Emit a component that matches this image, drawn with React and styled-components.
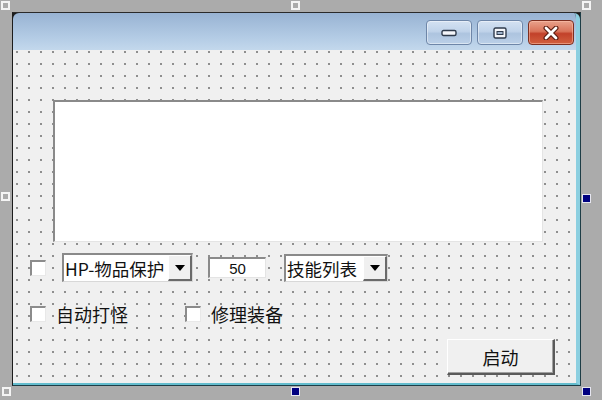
import styled, { createGlobalStyle } from 'styled-components'

const GlobalStyle = createGlobalStyle`
  html, body {
    margin: 0;
    padding: 0;
    background: #ababab;
  }
  body {
    font-family: 'Noto Sans CJK SC', 'Noto Sans', sans-serif;
  }
`

const Stage = styled.div`
  position: relative;
  width: 602px;
  height: 400px;
  box-sizing: border-box;
  padding: 12px 21px 14px 12px;
  background: #ababab;
  overflow: hidden;
`

const Handle = styled.div`
  position: absolute;
  box-sizing: border-box;
  width: 9px;
  height: 9px;
  left: ${({ x }) => x}px;
  top: ${({ y }) => y}px;
  border: ${({ active }) => (active ? '1px solid #e6e6f0' : '2px solid #f4f4f4')};
  background: ${({ active }) => (active ? '#000080' : 'transparent')};
`

const Window = styled.div`
  width: 100%;
  height: 100%;
  box-sizing: border-box;
  display: flex;
  flex-direction: column;
  background: #1c1c1c;
  border-left: 1px solid #1c1c1c;
  border-top: 1px solid #2a2a2a;
  border-right: 1px solid #1e3d46;
  border-bottom: 1px solid #1e3d46;
`

const Frame = styled.div`
  flex: 1;
  display: flex;
  flex-direction: column;
  border-right: 4px solid #8ccfe0;
  border-bottom: 2px solid #63bccd;
  border-top-left-radius: 6px;
  border-top-right-radius: 6px;
  overflow: hidden;
`

const TitleBar = styled.div`
  height: 37px;
  box-sizing: border-box;
  display: flex;
  justify-content: flex-end;
  align-items: flex-start;
  gap: 5px;
  padding: 7px 2px 0 0;
  background: linear-gradient(#98b3d3, #b5cde6 70%, #c3d8ec);
`

const CapButton = styled.div`
  width: 46px;
  height: 25px;
  box-sizing: border-box;
  display: flex;
  align-items: center;
  justify-content: center;
  border-radius: 4px;
  border: 1px solid ${({ close }) => (close ? '#7d2f20' : '#6e86a8')};
  background: ${({ close }) =>
    close
      ? 'linear-gradient(#e9a28c, #d9745a 45%, #c2412a 55%, #d2603f)'
      : 'linear-gradient(#d4e2f2, #c0d3ea 45%, #adc4df 55%, #bbd0e8)'};
  box-shadow: inset 0 0 0 1px ${({ close }) => (close ? 'rgba(255,200,180,0.5)' : 'rgba(255,255,255,0.45)')};
`

const Body = styled.div`
  flex: 1;
  display: flex;
  flex-direction: column;
  box-sizing: border-box;
  padding: 50px 0 0 17px;
  background-color: #f0f0f0;
  background-image: radial-gradient(circle at 1px 1px, #505050 0.55px, transparent 0.95px);
  background-size: 12px 12px;
  background-position: 3px 1px;
`

const TextArea = styled.div`
  width: 490px;
  height: 142px;
  box-sizing: border-box;
  margin-left: 23px;
  background: #ffffff;
  border-top: 2px solid #8a8a8a;
  border-left: 2px solid #8a8a8a;
  border-right: 1px solid #e4e4e4;
  border-bottom: 1px solid #e4e4e4;
`

const ControlRow = styled.div`
  display: flex;
  align-items: center;
  height: ${({ h }) => h}px;
  margin-top: ${({ mt }) => mt}px;
`

const CheckBox = styled.div`
  width: 16px;
  height: 16px;
  box-sizing: border-box;
  flex: none;
  background: #ffffff;
  border-top: 2px solid #8c8c8c;
  border-left: 2px solid #8c8c8c;
  border-right: 1px solid #e8e8e8;
  border-bottom: 1px solid #e8e8e8;
`

const CheckItem = styled.div`
  display: flex;
  align-items: center;
  gap: 10px;
  width: ${({ w }) => (w ? `${w}px` : 'auto')};
  font-size: 18px;
  color: #111;
  line-height: 20px;
`

const Combo = styled.div`
  display: flex;
  align-items: stretch;
  box-sizing: border-box;
  width: ${({ w }) => w}px;
  height: ${({ h }) => h}px;
  margin-left: ${({ ml }) => ml}px;
  background: #ffffff;
  border-top: 2px solid #8a8a8a;
  border-left: 2px solid #8a8a8a;
  border-right: 1px solid #d8d8d8;
  border-bottom: 1px solid #d8d8d8;
`

const ComboText = styled.div`
  flex: 1;
  display: flex;
  align-items: center;
  padding-left: 1px;
  font-size: 17.5px;
  color: #111;
  white-space: nowrap;
  overflow: hidden;
`

const DropButton = styled.div`
  width: 24px;
  box-sizing: border-box;
  display: flex;
  align-items: center;
  justify-content: center;
  background: #f0f0f0;
  border-top: 1px solid #ffffff;
  border-left: 1px solid #ffffff;
  border-right: 2px solid #6a6a6a;
  border-bottom: 2px solid #6a6a6a;
  &::after {
    content: '';
    border-left: 5px solid transparent;
    border-right: 5px solid transparent;
    border-top: 6px solid #000;
  }
`

const NumberBox = styled.div`
  width: 58px;
  height: 21px;
  box-sizing: border-box;
  margin-left: 15px;
  display: flex;
  align-items: center;
  justify-content: center;
  background: #ffffff;
  border-top: 2px solid #8a8a8a;
  border-left: 2px solid #8a8a8a;
  border-right: 1px solid #e4e4e4;
  border-bottom: 1px solid #e4e4e4;
  font-family: 'Liberation Sans', Arial, sans-serif;
  font-size: 15px;
  color: #111;
`

const StartButton = styled.div`
  align-self: flex-end;
  width: 108px;
  height: 36px;
  box-sizing: border-box;
  margin: 15px 21px 0 0;
  display: flex;
  align-items: center;
  justify-content: center;
  background: #f0f0f0;
  border-top: 1px solid #ffffff;
  border-left: 1px solid #ffffff;
  border-right: 2px solid #5a5a5a;
  border-bottom: 2px solid #5a5a5a;
  box-shadow: inset -1px -1px 0 #a0a0a0;
  font-size: 18px;
  color: #111;
`

const MinIcon = () => (
  <svg width="16" height="8" viewBox="0 0 16 8">
    <rect x="1" y="1.5" width="14" height="5" rx="1.5" fill="#f4f6fa" stroke="#2f3b4c" strokeWidth="1.4" />
  </svg>
)

const MaxIcon = () => (
  <svg width="14" height="12" viewBox="0 0 14 12">
    <rect x="1" y="1" width="12" height="10" rx="1.5" fill="#f4f6fa" stroke="#2f3b4c" strokeWidth="1.4" />
    <rect x="4" y="4.5" width="6" height="3" fill="#9fb3cc" stroke="#2f3b4c" strokeWidth="1" />
  </svg>
)

const CloseIcon = () => (
  <svg width="16" height="14" viewBox="0 0 16 14">
    <path d="M3 2 L13 12 M13 2 L3 12" stroke="#5a1c10" strokeWidth="5" strokeLinecap="round" />
    <path d="M3 2 L13 12 M13 2 L3 12" stroke="#ffffff" strokeWidth="2.8" strokeLinecap="round" />
  </svg>
)

const handles = [
  { x: 1, y: 1 },
  { x: 291, y: 1 },
  { x: 582, y: 1 },
  { x: 1, y: 192 },
  { x: 2, y: 387 },
  { x: 582, y: 194, active: true },
  { x: 291, y: 387, active: true },
  { x: 582, y: 387, active: true }
]

const App = () => {
  return (
    <>
      <GlobalStyle />
      <Stage>
        <Window>
          <Frame>
            <TitleBar>
              <CapButton>
                <MinIcon />
              </CapButton>
              <CapButton>
                <MaxIcon />
              </CapButton>
              <CapButton close>
                <CloseIcon />
              </CapButton>
            </TitleBar>
            <Body>
              <TextArea />
              <ControlRow h={29} mt={11}>
                <CheckBox />
                <Combo w={131} h={29} ml={16}>
                  <ComboText>HP-物品保护</ComboText>
                  <DropButton />
                </Combo>
                <NumberBox>50</NumberBox>
                <Combo w={104} h={28} ml={18}>
                  <ComboText>技能列表</ComboText>
                  <DropButton />
                </Combo>
              </ControlRow>
              <ControlRow h={20} mt={22}>
                <CheckItem w={155}>
                  <CheckBox />
                  <span>自动打怪</span>
                </CheckItem>
                <CheckItem>
                  <CheckBox />
                  <span>修理装备</span>
                </CheckItem>
              </ControlRow>
              <StartButton>启动</StartButton>
            </Body>
          </Frame>
        </Window>
        {handles.map((h, i) => (
          <Handle key={i} x={h.x} y={h.y} active={h.active} />
        ))}
      </Stage>
    </>
  )
}

export default App
